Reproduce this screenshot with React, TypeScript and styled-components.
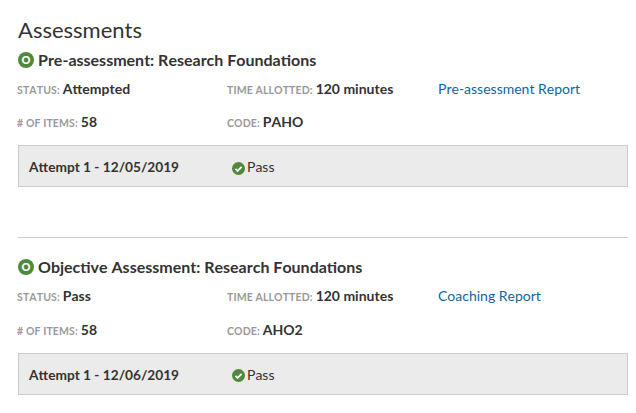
import React from 'react';
import styled, { createGlobalStyle } from 'styled-components';

const GlobalStyle = createGlobalStyle`
  html, body {
    margin: 0;
    padding: 0;
    background: #fff;
  }
  body {
    font-family: Lato, "Open Sans", sans-serif;
    font-kerning: none;
    color: #333;
  }
`;

const Page = styled.div`
  width: 636px;
  height: 413px;
  overflow: hidden;
  box-sizing: border-box;
  padding: 16px 8px 0 18px;
`;

const Heading = styled.h2`
  margin: 0;
  font-size: 22px;
  line-height: 28px;
  font-weight: 400;
  color: #333;
`;

const Assessment = styled.section<{ $divided?: boolean }>`
  margin-top: ${p => (p.$divided ? '50px' : '5.8px')};
  padding-top: ${p => (p.$divided ? '19px' : '0')};
  border-top: ${p => (p.$divided ? '1px solid #ccc' : 'none')};
`;

const TitleRow = styled.div`
  display: flex;
  align-items: center;
  gap: 4px;
  height: 20px;
`;

const Badge = styled.span`
  display: flex;
  align-items: center;
  justify-content: center;
  width: 16px;
  height: 16px;
  border-radius: 50%;
  background: #4f8a3c;
  color: #fff;
  font-size: 11px;
  line-height: 16px;
  font-weight: 900;
`;

const Title = styled.h3`
  margin: 0;
  font-size: 16px;
  line-height: 20px;
  font-weight: 700;
  color: #333;
`;

const Details = styled.div`
  display: grid;
  grid-template-columns: 210px 211px 1fr;
  grid-auto-rows: 33.25px;
  margin-top: 9px;
  margin-left: -1px;
`;

const Cell = styled.div`
  font-size: 14px;
  line-height: 20px;
  font-weight: 700;
  color: #333;
  white-space: nowrap;
`;

const Label = styled.span`
  font-size: 10.5px;
  font-weight: 700;
  letter-spacing: 0.12px;
  text-transform: uppercase;
  color: #999;
  margin-right: 3px;
`;

const ReportLink = styled.a`
  font-size: 14px;
  line-height: 20px;
  font-weight: 400;
  color: #0f659e;
  text-decoration: none;
`;

const Attempt = styled.div`
  display: grid;
  grid-template-columns: 203px 1fr;
  align-items: center;
  box-sizing: border-box;
  height: 42px;
  padding: 0.6px 10px 0;
  background: #ebebeb;
  border: 1px solid #ccc;
`;

const AttemptName = styled.span`
  font-size: 13.7px;
  font-weight: 700;
  color: #333;
`;

const Result = styled.span`
  display: flex;
  align-items: center;
  gap: 2px;
  font-size: 14px;
  color: #333;
`;

const PassMark = styled.svg`
  margin-top: 3px;
`;

const PassIcon = () => (
  <PassMark width="13" height="13" viewBox="0 0 13 13" aria-hidden="true">
    <circle cx="6.5" cy="6.5" r="6.5" fill="#4f8a3c" />
    <path d="M3.4 6.8l2.2 2.2 4-4.2" fill="none" stroke="#fff" strokeWidth="1.9" />
  </PassMark>
);

const assessments = [
  {
    title: 'Pre-assessment: Research Foundations',
    status: 'Attempted',
    code: 'PAHO',
    report: 'Pre-assessment Report',
    attempt: 'Attempt 1 - 12/05/2019',
  },
  {
    title: 'Objective Assessment: Research Foundations',
    status: 'Pass',
    code: 'AHO2',
    report: 'Coaching Report',
    attempt: 'Attempt 1 - 12/06/2019',
  },
];

export default function App() {
  return (
    <Page>
      <GlobalStyle />
      <Heading>Assessments</Heading>
      {assessments.map((item, i) => (
        <Assessment key={item.code} $divided={i > 0}>
          <TitleRow>
            <Badge>O</Badge>
            <Title>{item.title}</Title>
          </TitleRow>
          <Details>
            <Cell>
              <Label>Status:</Label>
              {item.status}
            </Cell>
            <Cell>
              <Label>Time Allotted:</Label>
              120 minutes
            </Cell>
            <Cell>
              <ReportLink href="#">{item.report}</ReportLink>
            </Cell>
            <Cell>
              <Label># of Items:</Label>
              58
            </Cell>
            <Cell>
              <Label>Code:</Label>
              {item.code}
            </Cell>
          </Details>
          <Attempt>
            <AttemptName>{item.attempt}</AttemptName>
            <Result>
              <PassIcon />
              Pass
            </Result>
          </Attempt>
        </Assessment>
      ))}
    </Page>
  );
}
